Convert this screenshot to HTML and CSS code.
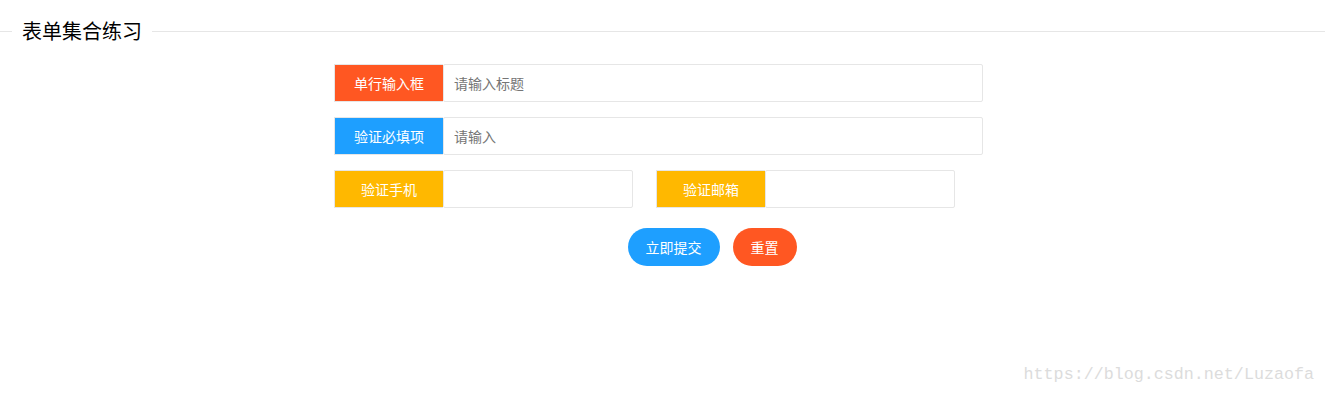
FILE: index.html
```html
<!DOCTYPE html>
<html lang="zh-CN">
<head>
    <meta charset="UTF-8">
    <meta name="viewport" content="width=device-width, initial-scale=1.0">
    <title>表单集合练习</title>
    <link rel="stylesheet" href="styles.css">
</head>
<body>
    <fieldset class="field-title">
        <legend>表单集合练习</legend>
    </fieldset>

    <form class="form-pane" onsubmit="return false">
        <div class="form-item">
            <label class="form-label red">单行输入框</label>
            <input class="form-input" type="text" placeholder="请输入标题">
        </div>
        <div class="form-item">
            <label class="form-label blue">验证必填项</label>
            <input class="form-input" type="text" placeholder="请输入">
        </div>
        <div class="form-item inline-row">
            <div class="form-inline">
                <label class="form-label yellow">验证手机</label>
                <input class="form-input" type="tel">
            </div>
            <div class="form-inline">
                <label class="form-label yellow">验证邮箱</label>
                <input class="form-input" type="text">
            </div>
        </div>
        <div class="form-actions">
            <button class="btn btn-blue" type="submit">立即提交</button>
            <button class="btn btn-red" type="reset">重置</button>
        </div>
    </form>

    <div class="watermark">https://blog.csdn.net/Luzaofa</div>
</body>
</html>
```

FILE: styles.css
```css
body {
    font-family: "Noto Sans CJK SC", "Noto Sans", sans-serif;
    font-size: 14px;
    color: #333;
    background-color: #fff;
    margin: 0;
}
.field-title {
    margin: 17px 0 0;
    padding: 0;
    border: none;
    border-top: 1px solid #e6e6e6;
}
.field-title legend {
    margin-left: 12px;
    padding: 0 10px;
    font-size: 20px;
    line-height: 28px;
    color: #000;
}
.form-pane {
    width: 649px;
    margin: 19px 0 0 334px;
}
.form-item {
    display: flex;
    height: 38px;
    margin-bottom: 15px;
}
.inline-row {
    gap: 23px;
}
.form-inline {
    display: flex;
    width: 299px;
}
.form-label {
    width: 109px;
    flex: none;
    box-sizing: border-box;
    border: 1px solid #e6e6e6;
    border-right: none;
    color: #fff;
    text-align: center;
    line-height: 36px;
}
.red {
    background-color: #ff5722;
}
.blue {
    background-color: #1e9fff;
}
.yellow {
    background-color: #ffb800;
}
.form-input {
    flex: 1;
    min-width: 0;
    box-sizing: border-box;
    height: 38px;
    margin: 0;
    padding: 0 10px;
    border: 1px solid #e6e6e6;
    border-radius: 2px;
    font-family: inherit;
    font-size: 14px;
    outline: none;
}
.form-input::placeholder {
    color: #757575;
}
.form-actions {
    margin-left: 107px;
    padding-top: 5px;
    display: flex;
    justify-content: center;
    gap: 13px;
}
.btn {
    height: 38px;
    padding: 0 18px;
    border: none;
    border-radius: 19px;
    color: #fff;
    font-family: inherit;
    font-size: 14px;
    cursor: pointer;
}
.btn-blue {
    background-color: #1e9fff;
}
.btn-red {
    background-color: #ff5722;
}
.watermark {
    position: absolute;
    right: 11px;
    top: 365px;
    font-family: "Liberation Mono", monospace;
    font-size: 16.7px;
    color: #dcdcdc;
}
```
